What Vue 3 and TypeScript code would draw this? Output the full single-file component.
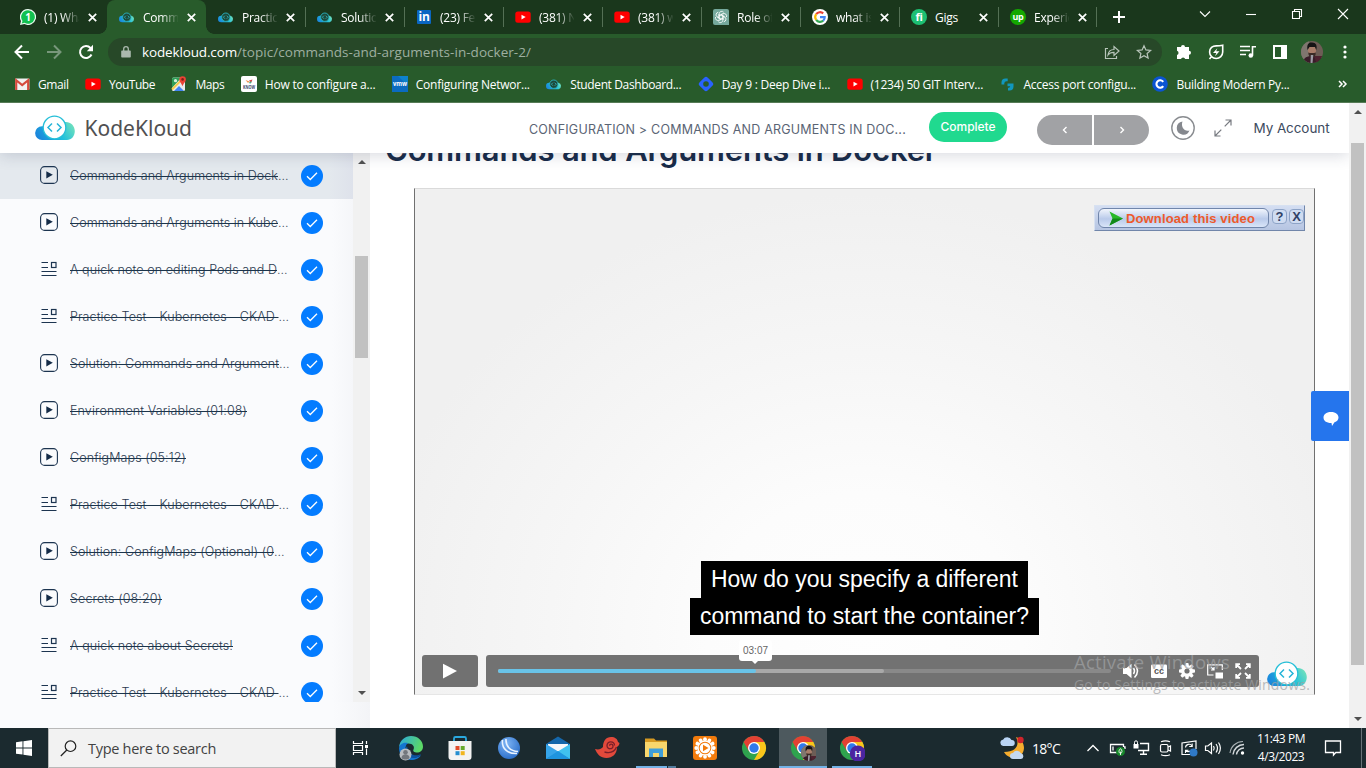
<script setup lang="ts">
interface Tab { icon: string; title: string; active?: boolean; divider?: boolean }
interface Bookmark { icon: string; label: string; width: number }
interface Lesson { kind: 'play' | 'note'; title: string; width: number; cut?: boolean; current?: boolean }
interface TaskApp { icon: string; state?: 'active' | 'open' | 'stacked' }

const tabs: Tab[] = [
  { icon: 'whatsapp', title: '(1) WhatsApp' },
  { icon: 'kodekloud', title: 'Commands', active: true },
  { icon: 'kodekloud', title: 'Practice Test', divider: true },
  { icon: 'kodekloud', title: 'Solution', divider: true },
  { icon: 'linkedin', title: '(23) Feed', divider: true },
  { icon: 'youtube', title: '(381) Nana', divider: true },
  { icon: 'youtube', title: '(381) what', divider: true },
  { icon: 'openai', title: 'Role of', divider: true },
  { icon: 'google', title: 'what is', divider: true },
  { icon: 'fiverr', title: 'Gigs', divider: true },
  { icon: 'upwork', title: 'Experience', divider: true },
]

const bookmarks: Bookmark[] = [
  { icon: 'gmail', label: 'Gmail', width: 30.5 },
  { icon: 'youtube', label: 'YouTube', width: 46 },
  { icon: 'maps', label: 'Maps', width: 29 },
  { icon: 'know', label: 'How to configure a...', width: 110.5 },
  { icon: 'vmw', label: 'Configuring Networ...', width: 114 },
  { icon: 'kodekloud', label: 'Student Dashboard...', width: 111 },
  { icon: 'hashnode', label: 'Day 9 : Deep Dive i...', width: 108.5 },
  { icon: 'youtube', label: '(1234) 50 GIT Interv...', width: 112.5 },
  { icon: 'access', label: 'Access port configu...', width: 112.5 },
  { icon: 'coursera', label: 'Building Modern Py...', width: 113 },
]

const lessons: Lesson[] = [
  { kind: 'play', title: 'Commands and Arguments in Dock', width: 208, cut: true, current: true },
  { kind: 'play', title: 'Commands and Arguments in Kube', width: 208, cut: true },
  { kind: 'note', title: 'A quick note on editing Pods and D', width: 207, cut: true },
  { kind: 'note', title: 'Practice Test - Kubernetes - CKAD ', width: 208.5, cut: true },
  { kind: 'play', title: 'Solution: Commands and Argument', width: 209, cut: true },
  { kind: 'play', title: 'Environment Variables (01:08)', width: 177 },
  { kind: 'play', title: 'ConfigMaps (05:12)', width: 116 },
  { kind: 'note', title: 'Practice Test - Kubernetes - CKAD ', width: 208.5, cut: true },
  { kind: 'play', title: 'Solution: ConfigMaps (Optional) (0', width: 204, cut: true },
  { kind: 'play', title: 'Secrets (08:20)', width: 92 },
  { kind: 'note', title: 'A quick note about Secrets!', width: 163 },
  { kind: 'note', title: 'Practice Test - Kubernetes - CKAD ', width: 208.5, cut: true },
]

const apps: TaskApp[] = [
  { icon: 'edge' }, { icon: 'store' }, { icon: 'bluedisc' }, { icon: 'mail' }, { icon: 'nautilus' },
  { icon: 'explorer', state: 'stacked' }, { icon: 'gear-orange' }, { icon: 'chrome' },
  { icon: 'chrome-user', state: 'active' }, { icon: 'chrome-h', state: 'open' },
]

const tray = ['chevron', 'battery', 'network', 'camera', 'sync', 'speaker', 'wifi']
const toothAngles = [0, 45, 90, 135, 180, 225, 270, 315]
const petalAngles = [0, 30, 60, 90, 120, 150, 180, 210, 240, 270, 300, 330]

// Adjusts letter spacing so that a label occupies the given width in pixels.
const vFit = {
  mounted(el: HTMLElement, binding: { value: number }) {
    const width = el.getBoundingClientRect().width
    const count = (el.textContent ?? '').length
    if (count > 0) el.style.letterSpacing = `${(binding.value - width) / count}px`
  },
}
</script>

<template>
  <div class="screen">
    <svg class="sprite" aria-hidden="true">
      <defs>
        <linearGradient id="g-cloud" x1="0" y1="0.6" x2="1" y2="0.3">
          <stop offset="0" stop-color="#1b86dc" /><stop offset=".55" stop-color="#1fbfdc" /><stop offset="1" stop-color="#6fe0bd" />
        </linearGradient>
        <linearGradient id="g-edge" x1="0" y1="0" x2="1" y2="0.3">
          <stop offset="0" stop-color="#2aa7e0" /><stop offset="1" stop-color="#5bd967" />
        </linearGradient>
        <radialGradient id="g-disc" cx=".4" cy=".3" r=".8">
          <stop offset="0" stop-color="#7db4f5" /><stop offset="1" stop-color="#2367c4" />
        </radialGradient>
      </defs>

      <symbol id="logo" viewBox="0 0 40 26">
        <path d="M7 25A6.900 6.900 0 0 1 7 11.200H11L28 7.500C34 5.500 39.800 10 39.800 16 39.800 21 36.500 25 32 25Z" fill="url(#g-cloud)" />
        <circle cx="19.500" cy="12.500" r="11.300" fill="#fff" stroke="#25bfd8" stroke-width="1.300" />
        <path d="m17 8.500-4 4 4 4m5-8 4 4-4 4" fill="none" stroke="#25b4d8" stroke-width="1.500" />
      </symbol>
      <symbol id="kodekloud" viewBox="0 0 16 16">
        <path d="M3.200 13.200a3.200 3.200 0 0 1 0-6.400L12.300 6.800a3.300 3.300 0 0 1 .4 6.400Z" fill="url(#g-cloud)" />
        <circle cx="7.800" cy="8.200" r="4.200" fill="#1d4a3b" stroke="#2ab7c5" stroke-width=".9" />
        <path d="M6.900 6.700 5.400 8.200 6.900 9.700M8.800 6.700l1.500 1.500-1.500 1.500" fill="none" stroke="#33bfca" stroke-width=".8" />
      </symbol>
      <symbol id="whatsapp" viewBox="0 0 16 16">
        <path d="M8 0a8 8 0 1 1-3.600 15.100L0 16l1-4A8 8 0 0 1 8 0Z" fill="#e9fbef" />
        <path d="M8 1.200A6.800 6.800 0 1 1 4.500 13.800L1.700 14.500 2.500 12A6.800 6.800 0 0 1 8 1.200Z" fill="#12c150" />
        <text x="8" y="11.700" text-anchor="middle" font-family="Open Sans, sans-serif" font-weight="700" font-size="10" fill="#fff">1</text>
      </symbol>
      <symbol id="linkedin" viewBox="0 0 16 16">
        <rect x="1" y="1" width="14" height="14" rx="1" fill="#0a66c2" />
        <text x="8" y="12.300" text-anchor="middle" font-family="Open Sans, sans-serif" font-weight="700" font-size="12" fill="#fff">in</text>
      </symbol>
      <symbol id="youtube" viewBox="0 0 16 16">
        <rect x=".3" y="2.500" width="15.400" height="11.200" rx="2.500" fill="#f00" /><path d="m6.500 5.700 4.200 2.400-4.200 2.400Z" fill="#fff" />
      </symbol>
      <symbol id="openai" viewBox="0 0 16 16">
        <path d="M2 0h12a2 2 0 0 1 2 2v14H2a2 2 0 0 1-2-2V2a2 2 0 0 1 2-2Z" fill="#75a99c" />
        <g fill="none" stroke="#fff" stroke-width=".8">
          <path v-for="a in [0, 60, 120, 180, 240, 300]" :key="a" :transform="`rotate(${a} 8 8)`" d="M6.200 9V4.800a2.500 2.500 0 0 1 4.500-1.500M6.200 6.600 9.600 4.700" />
        </g>
      </symbol>
      <symbol id="google" viewBox="0 0 16 16">
        <circle cx="8" cy="8" r="8" fill="#fff" />
        <g fill="none" stroke-width="2.200">
          <path d="M4.200 5.200a4.700 4.700 0 0 1 7-.8" stroke="#ea4335" /><path d="M4.200 5.200a4.700 4.700 0 0 0 0 5.600" stroke="#fbbc05" />
          <path d="M4.200 10.800a4.700 4.700 0 0 0 7 .9" stroke="#34a853" /><path d="M8 8.100h4.700a4.700 4.700 0 0 1-1.500 3.600" stroke="#4285f4" />
        </g>
      </symbol>
      <symbol id="fiverr" viewBox="0 0 16 16">
        <circle cx="8" cy="8" r="8" fill="#1dbf73" />
        <text x="8" y="11.800" text-anchor="middle" font-family="Open Sans, sans-serif" font-weight="700" font-size="11" fill="#fff">fi</text>
      </symbol>
      <symbol id="upwork" viewBox="0 0 16 16">
        <circle cx="8" cy="8" r="8" fill="#14a800" />
        <text x="8" y="10.600" text-anchor="middle" font-family="Open Sans, sans-serif" font-weight="700" font-size="9" fill="#fff">up</text>
      </symbol>
      <symbol id="gmail" viewBox="0 0 16 16">
        <rect x="1" y="2.500" width="14.400" height="11.500" rx="1" fill="#f2f2f2" />
        <path d="M2.200 14V4.200L8.200 9l6-4.800V14" fill="none" stroke="#d54b3d" stroke-width="2.200" />
      </symbol>
      <symbol id="maps" viewBox="0 0 16 16">
        <rect x="1" y="1.500" width="13" height="13.500" rx="1.500" fill="#e8eaed" /><path d="M1 12V3a1.500 1.500 0 0 1 1.500-1.500h8Z" fill="#2f9e57" />
        <path d="m3 15 5-5 5 5Z" fill="#4285f4" /><path d="m1 13.500 11-11" stroke="#f7cb4d" stroke-width="2" /><circle cx="4.500" cy="4.700" r="1.600" fill="#d5f0dc" />
        <path d="M11.500 10.300C10.500 7 8.300 6 8.300 3.500a3.300 3.300 0 0 1 6.600 0c0 2.500-2.400 3.500-3.400 6.800Z" fill="#ea4335" /><circle cx="11.600" cy="3.400" r="1.300" fill="#7e2018" />
      </symbol>
      <symbol id="know" viewBox="0 0 16 16">
        <rect width="16" height="16" rx="2" fill="#fff" /><path d="m4.500 4 4 1.500L7 7Z" fill="#f0934d" /><path d="m8 4.500 3.500-1L10 7Z" fill="#d94848" /><path d="m8 6 3-.5L9 8Z" fill="#45b085" />
        <text x="8" y="13.400" text-anchor="middle" textLength="12" lengthAdjust="spacingAndGlyphs" font-family="Open Sans, sans-serif" font-weight="700" font-size="4.800" fill="#37456b">KNOW</text>
      </symbol>
      <symbol id="vmw" viewBox="0 0 16 16">
        <rect width="16" height="16" fill="#0b6bc0" /><path d="M16 0v10L6 0Z" fill="#0d82cc" />
        <text x="8" y="10" text-anchor="middle" textLength="14" lengthAdjust="spacingAndGlyphs" font-family="Open Sans, sans-serif" font-weight="700" font-size="6.500" fill="#fff">vmw</text>
      </symbol>
      <symbol id="hashnode" viewBox="0 0 16 16">
        <rect x="2.200" y="2.200" width="11.600" height="11.600" rx="2.600" transform="rotate(45 8 8)" fill="#2962ff" /><circle cx="8" cy="8" r="2.800" fill="#285b2c" />
      </symbol>
      <symbol id="access" viewBox="0 0 16 16">
        <path d="M1.500 8.500V6.500a4 4 0 0 1 4-4h2.200v2.800H6.500a2.200 2.200 0 0 0-2.200 2v1.200ZM7.500 7.500h6v3a4 4 0 0 1-4 4H8v-2.800h.8a1.500 1.500 0 0 0 1.400-1.400H7.500Z" fill="#1197bd" />
      </symbol>
      <symbol id="coursera" viewBox="0 0 16 16">
        <circle cx="8" cy="8" r="7.800" fill="#0a54d2" /><path d="M11.200 5.900a3.700 3.700 0 1 0 0 4.200" fill="none" stroke="#fff" stroke-width="2.100" />
      </symbol>

      <symbol id="avatar" viewBox="0 0 22 22">
        <clipPath id="clip-av"><circle cx="11" cy="11" r="11" /></clipPath>
        <g clip-path="url(#clip-av)">
          <rect width="22" height="22" fill="#6d5d56" /><rect width="8" height="22" fill="#7f766f" />
          <path d="M2 22c0-6 5-7 9-7s9 1 11 4v3Z" fill="#391c29" /><path d="M13 15h9v6h-7Z" fill="#4f2230" />
          <ellipse cx="11" cy="9.500" rx="4" ry="5.500" fill="#a87c69" /><path d="M6.500 9C5.500 3 8 1 11 1.500c4 0 5.500 3 4.200 7.500L14 6H8.500Z" fill="#161415" />
          <path d="M7.200 11.500c2 .8 5.600.8 7.600 0 0 4-2 5-3.800 5s-3.800-2-3.800-5Z" fill="#3a2a26" /><path d="M9.800 14h2.500l-.8 8h-2Z" fill="#9d9ba4" />
        </g>
      </symbol>

      <symbol id="play" viewBox="0 0 18 18">
        <rect x=".6" y=".6" width="16.800" height="16.800" rx="4" fill="none" stroke="#1c3450" stroke-width="1.100" /><path d="M6.300 5.200 12.800 8.800l-6.500 3.700Z" fill="#142b47" />
      </symbol>
      <symbol id="note" viewBox="0 0 18 18">
        <path d="M1.500 2.500H8M1.500 7.500H8M1.500 11.500h15M1.500 15.500h15" stroke="#1c3450" stroke-width="1.200" fill="none" /><rect x="11.500" y="2.500" width="4.500" height="5" fill="none" stroke="#1c3450" stroke-width="1.200" />
      </symbol>

      <symbol id="edge" viewBox="0 0 26 26">
        <path d="M1 12C2 5 7 1 13 1c7 0 12 5 12 10.500 0 4-3 6-6 6-2.500 0-4.500-1-3.500-3 1.500-3-1-6-5-6S3 10 1 12Z" fill="url(#g-edge)" />
        <path d="M1 13C2 8 7 7 10 8c-4 3-4 12 4 14 3 1 7 0 9-2-4 8-22 7-22-7Z" fill="#1475cf" /><path d="M9 11c-4 5 0 12 7 12 3 0 6-2 7-4-4 2-12 3-14-8Z" fill="#0c529f" />
        <circle cx="7.500" cy="19.500" r="6" fill="#b9bcc0" /><circle cx="7.500" cy="17.300" r="2.300" fill="#73777d" /><path d="M3.500 23c0-5 8-5 8 0-2 2-6 2-8 0Z" fill="#73777d" />
      </symbol>
      <symbol id="store" viewBox="0 0 26 26">
        <path d="M7 6V3.500a1.500 1.500 0 0 1 1.500-1.500h9A1.500 1.500 0 0 1 19 3.500V6" fill="none" stroke="#2aa9e0" stroke-width="1.800" /><path d="M1.500 6h23v16a3 3 0 0 1-3 3h-17a3 3 0 0 1-3-3Z" fill="#f3f3f3" />
        <path d="M8.500 11h4v4h-4Z" fill="#e04b2a" /><path d="M13.700 11h4v4h-4Z" fill="#67a92d" /><path d="M8.500 16.200h4v4h-4Z" fill="#258ed0" /><path d="M13.700 16.200h4v4h-4Z" fill="#f1b61f" />
      </symbol>
      <symbol id="bluedisc" viewBox="0 0 26 26">
        <circle cx="13" cy="13" r="11" fill="url(#g-disc)" /><path d="M6.500 5C5.500 13 11 19 21 18.500M10 4C9.500 11 14 16 22 16.500" fill="none" stroke="#e9f3ff" stroke-width="1.600" />
      </symbol>
      <symbol id="mail" viewBox="0 0 26 26">
        <path d="M1 9 13 1.500 25 9v15H1Z" fill="#1567ab" /><path d="M3 9h20v8H3Z" fill="#f7f8fa" /><path d="m1 9 13 8L1 24Z" fill="#36a4e9" /><path d="M25 9 12 17l13 7Z" fill="#40c1ef" /><path d="m1 24 12-8 12 8Z" fill="#1e94df" />
      </symbol>
      <symbol id="nautilus" viewBox="0 0 26 26">
        <path d="M1 14c4 1 6 0 8-2 0-6 3-10 8-10 4 0 6.500 2 7 5l1.500 1c0 2-1.500 3-2.500 4 0 7-4.500 11-10.500 11S3 19 1 14Z" fill="#e2493b" /><path d="M20.500 10.500c0-4.500-7.500-5-7.500 0 0 4.500 6.500 4 6 .3-.5-2.200-3.400-2-3.400 0M22.500 12c-2 5-6 6.500-12 5" fill="none" stroke="#791f29" stroke-width="1.300" />
      </symbol>
      <symbol id="explorer" viewBox="0 0 26 26">
        <path d="M2 3.500h9l2 2h11v4H2Z" fill="#d79a22" /><path d="M2 7h22v15H2Z" fill="#f8d66c" /><path d="M6 13.500h14V22h-4v-4h-6v4H6Z" fill="#3f9ed9" />
      </symbol>
      <symbol id="gear-orange" viewBox="0 0 26 26">
        <rect x="1" y="1" width="24" height="24" rx="3" fill="#f27b0c" /><g fill="#fff"><circle v-for="a in petalAngles" :key="a" cx="13" cy="4.200" r="1.900" :transform="`rotate(${a} 13 13)`" /></g>
        <circle cx="13" cy="13" r="7" fill="none" stroke="#fff" stroke-width="1.400" /><circle cx="13" cy="13" r="5.300" fill="#fff" /><path d="m11 9.800 5.500 3.200-5.500 3.200Z" fill="#f27b0c" />
      </symbol>
      <symbol id="chrome" viewBox="0 0 26 26">
        <circle cx="13" cy="13" r="12" fill="#2fa34e" /><path d="M13 13 2.600 7a12 12 0 0 1 20.800 0Z" fill="#e34133" /><path d="M23.400 7A12 12 0 0 1 13 25l5.200-9L13 7Z" fill="#fbc51b" /><path d="M2.600 7 7.800 16 13 7Z" fill="#e34133" />
        <circle cx="13" cy="13" r="6" fill="#fff" /><circle cx="13" cy="13" r="4.700" fill="#3079ea" />
      </symbol>
      <symbol id="chrome-user" viewBox="0 0 26 26"><use href="#chrome" width="26" height="26" /><use href="#avatar" x="11" y="10" width="16" height="16" /></symbol>
      <symbol id="chrome-h" viewBox="0 0 26 26">
        <use href="#chrome" width="26" height="26" /><circle cx="18.800" cy="18.500" r="8" fill="#4b25a0" />
        <text x="18.800" y="22" text-anchor="middle" font-family="Open Sans, sans-serif" font-weight="600" font-size="9" fill="#fff">H</text>
      </symbol>

      <symbol id="chevron" viewBox="0 0 24 24"><path d="m6.500 15 5.500-5.500 5.500 5.500" fill="none" stroke="#fff" stroke-width="1.300" /></symbol>
      <symbol id="battery" viewBox="0 0 24 24"><path d="M18.500 11V8.500h-13v8H12M19 11h1v2M8 10.500v4" fill="none" stroke="#fff" stroke-width="1.300" /><circle cx="15.500" cy="15.500" r="4.500" fill="#16862a" /><path d="M15.500 12.600c2 1.800 2 4 0 5-2-1-2-3.200 0-5Zm0 3V19" stroke="#fff" fill="none" stroke-width=".9" /></symbol>
      <symbol id="network" viewBox="0 0 24 24"><path d="M11 7.500h8.500v7H9M14.500 14.500v3.500M11 18.300h7" fill="none" stroke="#fff" stroke-width="1.400" /><rect x="4.500" y="8" width="5" height="4.500" fill="#fff" /><path d="M5.500 8V6.300a1.500 1.500 0 0 1 3 0V8" stroke="#fff" fill="none" /></symbol>
      <symbol id="camera" viewBox="0 0 24 24"><rect x="7.500" y="8.500" width="7.500" height="7.500" rx="1.500" fill="none" stroke="#fff" stroke-width="1.200" /><path d="m15 11 2.500-1v5L15 14M8 5.800q4.500-2 9 0M8 18.700q4.500 2 9 0" fill="none" stroke="#fff" stroke-width="1.200" /></symbol>
      <symbol id="sync" viewBox="0 0 24 24"><path d="M13 18.500H5V7l14-2v8" fill="none" stroke="#fff" stroke-width="1.200" /><path d="M8.500 11.500A3.500 3.500 0 0 1 15 10m.2-2.500v3h-3M13 15a3.500 3.500 0 0 1-4.300-.5M8.500 17v-2.700h3" fill="none" stroke="#fff" stroke-width="1.100" /><circle cx="16.500" cy="16.500" r="4" fill="#2f79c7" /></symbol>
      <symbol id="speaker" viewBox="0 0 24 24"><path d="M4.500 10h2.300L10.500 7v10.500L6.800 14.500H4.500Z M12.500 10q1.500 2.200 0 4.500M15 8q3 4 0 8.500M17.500 6.500q3.800 5.500 0 11.500" fill="none" stroke="#fff" stroke-width="1.200" /></symbol>
      <symbol id="wifi" viewBox="0 0 24 24"><path d="M8 18.500A11 11 0 0 1 19 8.500M11.500 18.500A7.500 7.500 0 0 1 19 12" fill="none" stroke="#d5dadd" stroke-width="1.400" /><path d="M5 17A13 13 0 0 1 18 5.500" fill="none" stroke="#aab2b5" stroke-width="1.100" /><circle cx="17.500" cy="17" r="1.700" fill="#fff" /></symbol>
    </svg>

    <header class="browser">
      <div class="tabstrip">
        <div v-for="(tab, i) in tabs" :key="i" class="tab" :class="{ active: tab.active, divider: tab.divider }">
          <svg class="i16"><use :href="'#' + tab.icon" /></svg>
          <span class="tab-title">{{ tab.title }}</span>
          <svg class="close" viewBox="0 0 9 9"><path d="m.8.8 7.400 7.400m0-7.400L.8 8.200" /></svg>
        </div>
        <svg class="newtab" viewBox="0 0 12 12"><path d="M6 0v12M0 6h12" /></svg>
        <div class="window-buttons">
          <svg viewBox="0 0 12 12"><path d="m1 3.500 5 5 5-5" /></svg>
          <svg viewBox="0 0 12 12"><path d="M1 6.500h10" /></svg>
          <svg viewBox="0 0 12 12"><path d="M1.500 3.500h7v7h-7Zm2 0v-2h7v7h-2" /></svg>
          <svg viewBox="0 0 12 12"><path d="m1 1 10 10M11 1 1 11" /></svg>
        </div>
      </div>
      <div class="toolbar">
        <svg class="nav" viewBox="0 0 16 16"><path d="M15 8H2m6-6.500L1.500 8 8 14.500" /></svg>
        <svg class="nav dim" viewBox="0 0 16 16"><path d="M1 8h13M8 1.500 14.500 8 8 14.500" /></svg>
        <svg class="nav" viewBox="0 0 16 16"><path d="M13.500 10.500A6 6 0 1 1 12.500 4l1.500 1.500" /><path d="M15 .8v6.400H8.800Z" class="solid" /></svg>
        <div class="omnibox">
          <svg class="lock" viewBox="0 0 10 12"><path d="M1 4.500h8a.8.800 0 0 1 .8.800v5.400a.8.800 0 0 1-.8.800H1a.8.800 0 0 1-.8-.8V5.300A.8.800 0 0 1 1 4.500Z" fill="#abb9ae" /><path d="M2.700 5V3a2.300 2.300 0 0 1 4.600 0v2" fill="none" stroke="#abb9ae" stroke-width="1.300" /></svg>
          <span class="url"><span v-fit="95" class="fit host">kodekloud.com</span><span v-fit="294" class="fit">/topic/commands-and-arguments-in-docker-2/</span></span>
          <svg class="i16 share" viewBox="0 0 16 16"><path d="M4 4.500H1.500v10h11V12M4 11c.5-4 3-5.500 6-5.500V2.500L15 7l-5 4.500V8.300C7.500 8.200 5.500 9 4 11Z" /></svg>
          <svg class="i16 share" viewBox="0 0 16 16"><path d="m8 1.700 1.900 4.200 4.700.5-3.500 3.100 1 4.600L8 11.800l-4.100 2.300 1-4.600-3.500-3.100 4.700-.5Z" /></svg>
        </div>
        <div class="extensions">
          <svg class="i16" viewBox="0 0 16 16"><path d="M5 3a2 2 0 1 1 4 0h4v3.800a2 2 0 1 1 0 4V15H9.200a2.200 2.200 0 0 0-4.200 0H1v-4a2.200 2.200 0 0 0 0-4.200V3Z" fill="#fff" /></svg>
          <svg class="i16 line" viewBox="0 0 16 16"><path d="M14.700 1.300v6.700A6.500 6.500 0 0 1 1.600 8C1.600 4 4.500 1.900 8.200 1.900c2.300 0 4-.1 6.500-.6ZM4 12l-2.500 3" /><path d="M9.300 4.200 5 9h3.300L7 12.200l4.500-4.900H8.200Z" class="solid" /></svg>
          <svg class="i16 line" viewBox="0 0 16 16"><path d="M0 2.500h10M0 6.500h10M0 10.500h6M12.500 11.500V2.700H16" /><circle cx="10.800" cy="11.500" r="2.300" class="solid" /></svg>
          <svg class="i16" viewBox="0 0 16 16"><path d="M1 1h14v14H1Zm2 2v10h6V3Z" fill="#fff" fill-rule="evenodd" /></svg>
          <svg class="i22"><use href="#avatar" /></svg>
          <svg class="dots" viewBox="0 0 4 14"><circle cx="2" cy="2" r="1.600" /><circle cx="2" cy="7" r="1.600" /><circle cx="2" cy="12" r="1.600" /></svg>
        </div>
      </div>
      <div class="bookmarks">
        <div v-for="b in bookmarks" :key="b.label" class="bookmark">
          <svg class="i16"><use :href="'#' + b.icon" /></svg>
          <span v-fit="b.width" class="fit">{{ b.label }}</span>
        </div>
        <svg class="more" viewBox="0 0 9 8"><path d="m1 1 3 3-3 3m4-6 3 3-3 3" /></svg>
      </div>
    </header>

    <div class="page">
      <div class="viewport">
        <div class="topbar">
          <svg class="brand-logo"><use href="#logo" /></svg>
          <span class="brand"><span v-fit="107.500" class="fit">KodeKloud</span></span>
          <span class="crumb"><span v-fit="377" class="fit">CONFIGURATION &gt; COMMANDS AND ARGUMENTS IN DOC...</span></span>
          <button class="complete"><span v-fit="55" class="fit">Complete</span></button>
          <div class="pager">
            <button><svg viewBox="0 0 8 8"><path d="M5.500 1 2.500 4l3 3" /></svg></button>
            <button><svg viewBox="0 0 8 8"><path d="m2.500 1 3 3-3 3" /></svg></button>
          </div>
          <svg class="moon" viewBox="0 0 24 24"><circle cx="12" cy="12" r="11.200" fill="none" stroke="#8a8d91" stroke-width="1.400" /><path d="M11.500 5.500a6.600 6.600 0 1 0 7 9c-5 1.500-9-3.500-7-9Z" fill="#85888e" /></svg>
          <svg class="expand" viewBox="0 0 18 18"><path d="M1 17 7.300 10.700M17 1l-6.300 6.300M11.500 1H17v5.500M1 11.500V17h5.500" /></svg>
          <span class="account"><span v-fit="76" class="fit">My Account</span></span>
        </div>
        <div class="content">
          <aside class="sidebar">
            <div class="side-scroll">
              <ul class="lessons">
                <li v-for="(l, i) in lessons" :key="i" :class="{ current: l.current }">
                  <svg class="kind"><use :href="'#' + l.kind" /></svg>
                  <span class="lesson-title"><span v-fit="l.width" class="fit struck">{{ l.title }}</span><span v-if="l.cut">...</span></span>
                  <svg class="done" viewBox="0 0 22 22"><circle cx="11" cy="11" r="11" fill="#047cff" /><path d="m6 11.200 3.300 3.300L16 7.700" fill="none" stroke="#fff" stroke-width="1.300" /></svg>
                </li>
              </ul>
              <div class="side-bar">
                <svg class="arrow" viewBox="0 0 8 4"><path d="m0 4 4-4 4 4Z" /></svg>
                <div class="side-thumb"></div>
                <svg class="arrow" viewBox="0 0 8 4"><path d="m0 0 4 4 4-4Z" /></svg>
              </div>
            </div>
          </aside>
          <main class="main">
            <h1><span v-fit="552" class="fit">Commands and Arguments in Docker</span></h1>
            <section class="video">
              <div class="download">
                <div class="download-pill">
                  <svg viewBox="0 0 15 15"><path d="M1 .5 14.500 7.500 1 14.500l3-7Z" fill="#28b928" /><path d="M4 7.500h10.500L1 14.500Z" fill="#12891b" /></svg>
                  <span v-fit="129" class="fit">Download this video</span>
                </div>
                <b>?</b><b>X</b>
              </div>
              <div class="captions">
                <p><span v-fit="307" class="fit">How do you specify a different</span></p>
                <p><span v-fit="329" class="fit">command to start the container?</span></p>
              </div>
              <div class="player">
                <button class="playbtn"><svg viewBox="0 0 14 16"><path d="M0 .8 14 8 0 15.500Z" /></svg></button>
                <div class="controls">
                  <div class="track">
                    <div class="loaded"></div><div class="played"></div>
                    <div class="tip">03:07</div>
                  </div>
                  <div class="control-icons">
                    <svg viewBox="0 0 16 16"><path d="M0 5h3.500L8.500.8v14.500L3.500 11H0Z" fill="#fff" /><path d="M10.500 5q2 3 0 6M11.500 1.500q6 6.500 0 13" fill="none" stroke="#fff" stroke-width="1.500" /></svg>
                    <svg viewBox="0 0 16 16"><rect y="1.500" width="16" height="13.500" rx="1.200" fill="#fff" /><text x="8" y="10.500" text-anchor="middle" font-family="Liberation Sans, sans-serif" font-weight="700" font-size="9" fill="#555">cc</text></svg>
                    <svg viewBox="0 0 16 16"><g fill="#fff"><rect v-for="a in toothAngles" :key="a" x="6.300" y="0" width="3.400" height="5" rx="1" :transform="`rotate(${a} 8 8)`" /></g><circle cx="8" cy="8" r="4.300" fill="none" stroke="#fff" stroke-width="3.400" /></svg>
                    <svg viewBox="0 0 16 16"><path d="M6.500 12H.7V1.800h14.600V7M4 4l3 3m0-3v3H4" fill="none" stroke="#fff" stroke-width="1.200" /><rect x="8.500" y="9.500" width="7.500" height="6" fill="#fff" /></svg>
                    <svg viewBox="0 0 16 16"><path d="M6 6 1.500 1.500M6 10l-4.500 4.500M10 6l4.500-4.500M10 10l4.500 4.500M1.200 5V1.200H5M11 1.200h3.800V5M1.200 11v3.800H5M11 14.800h3.800V11" fill="none" stroke="#fff" stroke-width="1.800" /></svg>
                  </div>
                </div>
                <svg class="player-logo"><use href="#logo" /></svg>
              </div>
            </section>
          </main>
        </div>
        <button class="chat"><svg viewBox="0 0 16 14"><path d="M8 0c5 0 7.500 2.500 7.500 5.500 0 2.200-1.500 4-4 4.800L9 14l-.5-3C3 11 .5 8.500.5 5.500S3 0 8 0Z" fill="#fff" /></svg></button>
      </div>
      <div class="page-bar">
        <svg class="arrow" viewBox="0 0 8 4"><path d="m0 4 4-4 4 4Z" /></svg>
        <div class="page-thumb"></div>
        <svg class="arrow" viewBox="0 0 8 4"><path d="m0 0 4 4 4-4Z" /></svg>
      </div>
    </div>

    <footer class="taskbar">
      <div class="start"><svg viewBox="0 0 16 16"><path d="M0 2.200 6.500 1.300v6.200H0ZM7.400 1.200 16 0v7.500H7.400ZM0 8.400h6.500v6.200L0 13.700Zm7.400 0H16V16l-8.600-1.200Z" fill="#fff" /></svg></div>
      <div class="search">
        <svg viewBox="0 0 17 17"><circle cx="10.500" cy="6.200" r="5.300" /><path d="M6.800 10 .8 16" /></svg>
        <span v-fit="128" class="fit">Type here to search</span>
      </div>
      <div class="taskview"><svg viewBox="0 0 17 16"><path d="M1.500 1v2.500h9V1M1.500 15v-2.500h9V15M1.500 5.500h9v5h-9ZM14.500 1v3m0 4.500V15" fill="none" stroke="#fff" stroke-width="1.200" /><path d="M13 5h3v3h-3Z" fill="#fff" /></svg></div>
      <div class="apps">
        <div v-for="a in apps" :key="a.icon" class="app" :class="a.state"><svg><use :href="'#' + a.icon" /></svg></div>
      </div>
      <div class="systray">
        <div class="weather">
          <svg viewBox="0 0 26 24"><path d="M17 1c4 8 0 15-12 15 4 8 19 9 20-4 0-5-3-9-8-11Z" fill="#f6ad2e" /><circle cx="21.500" cy="4" r="3.200" fill="#cf242b" /><path d="M4 10a3.200 3.200 0 0 1 0-6.300A4.800 4.800 0 0 1 12.500 4a3 3 0 0 1 .5 6Z" fill="#b9d4f5" /><path d="M14 23a3 3 0 0 1 0-6 4.500 4.500 0 0 1 8 .3 2.900 2.900 0 0 1 0 5.700Z" fill="#c4d8f2" /></svg>
          <span v-fit="28" class="fit">18°C</span>
        </div>
        <div class="tray-icons"><svg v-for="t in tray" :key="t"><use :href="'#' + t" /></svg></div>
        <div class="clock"><span v-fit="48" class="fit">11:43 PM</span><span v-fit="46.500" class="fit">4/3/2023</span></div>
        <svg class="notice" viewBox="0 0 18 18"><path d="M1.500 2h15v11.500h-4.700L9.500 16v-2.500h-8Z" /></svg>
        <div class="peek"></div>
      </div>
    </footer>

    <div class="watermark">
      <div class="wm-title"><span v-fit="156" class="fit">Activate Windows</span></div>
      <div class="wm-sub"><span v-fit="236" class="fit">Go to Settings to activate Windows.</span></div>
    </div>
  </div>
</template>

<style>
html, body { margin: 0; overflow: hidden; }
</style>

<style scoped>
* { box-sizing: border-box; }
svg { flex: none; display: block; overflow: visible; }
button { border: 0; padding: 0; font: inherit; display: flex; align-items: center; justify-content: center; }
.sprite { position: absolute; width: 0; height: 0; }
.screen { position: relative; width: 1366px; height: 768px; overflow: hidden; display: flex; flex-direction: column; font-family: "Open Sans", "Noto Sans", sans-serif; background: #fff; }
.fit { display: inline-block; white-space: pre; flex: none; }
.i16 { width: 16px; height: 16px; }
.i22 { width: 22px; height: 22px; }

.browser { height: 103px; flex: none; background: #285b2b; color: #fff; border-bottom: 1px solid #567b56; }
.tabstrip { height: 34px; background: #1a371c; display: flex; padding-left: 8px; position: relative; }
.tab { width: 99px; height: 34px; display: flex; align-items: center; padding-left: 12px; position: relative; font-size: 12px; letter-spacing: -.25px; }
.tab.active { background: #285b2b; border-radius: 8px 8px 0 0; }
.tab.active::before, .tab.active::after { content: ""; position: absolute; bottom: 0; width: 8px; height: 8px; }
.tab.active::before { left: -8px; background: radial-gradient(circle at 0 0, #1a371c 7.500px, #285b2b 8px); }
.tab.active::after { right: -8px; background: radial-gradient(circle at 100% 0, #1a371c 7.500px, #285b2b 8px); }
.tab.divider + .tab.divider::before { content: ""; position: absolute; left: 0; top: 7px; width: 1px; height: 20px; background: #547055; }
.tab:nth-child(11)::after { content: ""; position: absolute; right: 0; top: 7px; width: 1px; height: 20px; background: #547055; }
.tab-title { margin-left: 8px; width: 35px; overflow: hidden; white-space: nowrap; -webkit-mask-image: linear-gradient(90deg, #000 18px, transparent 36px); mask-image: linear-gradient(90deg, #000 18px, transparent 36px); }
.tab:nth-child(10) .tab-title { -webkit-mask-image: none; mask-image: none; }
.close { width: 9px; height: 9px; margin-left: 8.500px; }
.close path, .newtab path { fill: none; stroke: #fff; stroke-width: 1.700; }
.newtab { width: 12px; height: 12px; margin: 11px 0 0 16px; }
.newtab path { stroke-width: 2; }
.window-buttons { margin-left: auto; display: flex; gap: 34px; padding: 8px 17px 0 0; }
.window-buttons svg { width: 12px; height: 12px; }
.window-buttons path { fill: none; stroke: #fff; stroke-width: 1.100; }

.toolbar { height: 32px; display: flex; align-items: center; padding: 4px 0 0 14px; }
.nav { width: 16px; height: 16px; margin-right: 16px; }
.nav path { fill: none; stroke: #fff; stroke-width: 2; }
.nav .solid, .line .solid { fill: #fff; stroke: none; }
.nav.dim path { stroke: #78977b; }
.omnibox { margin-left: -2px; width: 1054px; height: 28px; border-radius: 14px; background: #274828; display: flex; align-items: center; padding: 0 10px 0 13px; }
.lock { width: 10px; height: 12px; margin-right: 11px; }
.url { flex: 1; font-size: 13.500px; line-height: 28px; color: #9eafa0; display: flex; }
.host { color: #fff; }
.share { margin-left: 16px; }
.share path { fill: none; stroke: #b8c5ba; stroke-width: 1.200; }
.extensions { display: flex; align-items: center; gap: 16px; padding-left: 14px; }
.extensions .i22 { margin: 0 0 0 -3px; }
.line path { fill: none; stroke: #fff; stroke-width: 1.600; }
.dots { width: 4px; height: 14px; margin-left: 4px; fill: #fff; }
.bookmarks { height: 36px; display: flex; align-items: center; gap: 16.450px; padding: 0 19px 0 14px; font-size: 12px; }
.bookmark { display: flex; gap: 8px; align-items: center; }
.more { margin-left: auto; width: 9px; height: 8px; }
.more path { fill: none; stroke: #fff; stroke-width: 1.500; }

.page { height: 625px; display: flex; flex: none; }
.viewport { width: 1349px; position: relative; overflow: hidden; font-family: Inter, sans-serif; }
.topbar { position: relative; z-index: 2; height: 50px; background: #fff; box-shadow: 0 2px 16px rgba(50, 60, 90, .2); display: flex; align-items: center; padding-left: 35px; }
.brand-logo { width: 40px; height: 26px; }
.brand { margin-left: 9.500px; width: 444.500px; font: 400 21px/49px "Noto Sans", sans-serif; color: #505052; }
.crumb { font-size: 12.500px; color: #5a6474; width: 400px; padding-top: 2px; }
.complete { width: 78px; height: 30px; border-radius: 15px; background: #20d98f; color: #fff; font-size: 12px; font-weight: 500; margin-top: -3px; }
.pager { display: flex; gap: 2px; margin: 4px 0 0 30px; }
.pager button { width: 55px; height: 30px; background: #a1a2a5; }
.pager button:first-child { border-radius: 15px 0 0 15px; }
.pager button:last-child { border-radius: 0 15px 15px 0; }
.pager svg { width: 8px; height: 8px; }
.pager path { fill: none; stroke: #fff; stroke-width: 1.400; }
.moon { width: 24px; height: 24px; margin: -1px 0 0 22px; }
.expand { width: 18px; height: 18px; margin-left: 19px; }
.expand path { fill: none; stroke: #777a80; stroke-width: 1.200; }
.account { margin-left: 21.500px; font-size: 13.500px; color: #3d4b60; }

.content { display: flex; height: 575px; }
.sidebar { width: 370px; background: linear-gradient(90deg, #fafbfd 90%, #f3f4f7); }
.side-scroll { height: 549px; display: flex; overflow: hidden; }
.lessons { list-style: none; margin: -1px 0 0; padding: 0; width: 353px; flex: none; background: linear-gradient(90deg, #fafbfd 94%, #f5f6f9); }
.lessons li { height: 47px; display: flex; align-items: center; padding-left: 40px; }
.lessons li.current { background: linear-gradient(90deg, #e4e9ee 93%, #dee2eb); }
.kind { width: 18px; height: 18px; margin-top: -2px; }
.lesson-title { margin-left: 12px; width: 231px; font-size: 12.500px; font-weight: 300; color: #2b3a50; white-space: nowrap; display: flex; }
.struck { text-decoration: line-through; text-decoration-color: #1b344b; text-decoration-thickness: 1px; }
.done { width: 22px; height: 22px; }
.side-bar { width: 17px; background: #f1f1f1; display: flex; flex-direction: column; align-items: center; padding: 7px 0; }
.arrow { width: 8px; height: 4px; fill: #505050; }
.side-thumb { width: 13px; height: 102px; background: #c1c1c1; margin: 92px 0 auto; }

.main { width: 979px; background: #fff; }
h1 { margin: -20px 0 0 15px; height: 55px; font-size: 31px; font-weight: 600; line-height: 33px; color: #182b48; }
.video { position: relative; margin-left: 44px; width: 901px; height: 507px; border: 1px solid #dadada; border-left-color: #707070; border-right-color: #707070; border-bottom-color: #e6e6e6; background: radial-gradient(ellipse 450px 400px at 50% 88%, #fefefe 0, #fcfcfc 35%, #f6f6f6 70%, #f0f0f0 110%); display: flex; flex-direction: column; }
.download { align-self: flex-end; margin: 16px 9px 0 0; width: 211px; height: 26px; border: 1px solid #d7e1f1; border-bottom-color: #7186aa; border-right-color: #7186aa; background: linear-gradient(#d4def2, #b6c5e2); display: flex; align-items: center; padding-left: 3px; gap: 2px; }
.download-pill { width: 171px; height: 20px; border: 1px solid #7085aa; border-radius: 6px; background: linear-gradient(#f1f5fc, #b9caea 55%, #d9e5f8); display: flex; align-items: center; padding-left: 9px; gap: 2px; color: #ee5a2b; font: bold 13px "Liberation Sans", sans-serif; margin-right: 1px; }
.download-pill svg { width: 16px; height: 15px; }
.download b { width: 15px; height: 15px; border: 1px solid #8da3c7; border-radius: 4px; background: #cfdcf1; color: #2f4066; font: bold 13px/14px "Liberation Sans", sans-serif; text-align: center; margin-top: -4px; }
.captions { margin-top: 330px; display: flex; flex-direction: column; align-items: center; color: #fff; font: 23px/37px "Liberation Sans", Arial, sans-serif; }
.captions p { margin: 0; background: #000; height: 37px; padding: 0 10px; }
.player { margin-top: 20px; display: flex; padding-left: 7px; }
.playbtn { width: 56px; height: 32px; border-radius: 3px; background: #717171; }
.playbtn svg { width: 14px; height: 16px; fill: #fff; }
.controls { margin-left: 8px; width: 773px; height: 32px; background: #727272; border-radius: 3px; display: flex; align-items: center; padding-left: 12px; }
.track { position: relative; width: 613px; height: 4px; background: #898989; border-radius: 2px; }
.loaded, .played { position: absolute; left: 0; top: 0; height: 4px; border-radius: 2px; }
.loaded { width: 386px; background: #a9a9a9; }
.played { width: 258px; background: #69c3e8; }
.tip { position: absolute; left: 241px; top: -29px; width: 33px; height: 21px; background: #fff; border-radius: 3px; font: 10px/21px "Liberation Sans", sans-serif; color: #666; text-align: center; }
.tip::after { content: ""; position: absolute; left: 13px; top: 21px; border: 3.500px solid transparent; border-top-color: #fff; border-bottom: 0; }
.control-icons { display: flex; gap: 12px; margin-left: 12px; }
.control-icons svg { width: 16px; height: 16px; }
.player-logo { width: 40px; height: 26px; margin: 6px 0 0 8px; }
.chat { position: absolute; z-index: 1; left: 1311px; top: 288px; width: 38px; height: 50px; background: #2575ed; border-radius: 2px 0 0 2px; padding-top: 6px; }
.chat svg { width: 16px; height: 14px; margin-left: 2px; }
.page-bar { width: 17px; background: #f1f1f1; display: flex; flex-direction: column; align-items: center; padding: 7px 0; }
.page-thumb { width: 13px; height: 522px; background: #c1c1c1; margin: 29px 0 auto; }

.taskbar { height: 40px; flex: none; background: #1b2a2f; display: flex; color: #fff; }
.start { width: 48px; display: flex; align-items: center; justify-content: center; }
.start svg { width: 16px; height: 16px; }
.search { width: 288px; background: #f2f2f2; border: 1px solid #b9b9b9; display: flex; align-items: center; padding-left: 11px; gap: 11px; font-size: 14.500px; color: #424242; }
.search svg { width: 17px; height: 17px; fill: none; stroke: #222; stroke-width: 1.200; }
.taskview { width: 48px; display: flex; align-items: center; justify-content: center; }
.taskview svg { width: 17px; height: 16px; }
.apps { display: flex; margin-left: 2px; }
.app { width: 49px; position: relative; display: flex; align-items: center; justify-content: center; }
.app svg { width: 26px; height: 26px; }
.app.active { background: linear-gradient(90deg, transparent 1px, #4d595e 1px); }
.app.active::after, .app.open::after, .app.stacked::after { content: ""; position: absolute; bottom: 0; left: 1px; height: 2px; width: 48px; background: #73b1e6; }
.app.open::after { left: 5px; width: 40px; }
.app.stacked::after { left: 5px; width: 40px; background: linear-gradient(90deg, #73b1e6 31px, #1b2a2f 31px, #1b2a2f 32px, #527b9d 32px); }
.systray { margin-left: auto; display: flex; align-items: center; }
.weather { display: flex; align-items: center; font-size: 14px; width: 82px; }
.weather svg { width: 26px; height: 24px; margin-right: 7px; }
.tray-icons { display: flex; }
.tray-icons svg { width: 24px; height: 24px; }
.clock { width: 64px; display: flex; flex-direction: column; align-items: center; font-size: 12px; line-height: 18px; }
.notice { width: 18px; height: 18px; margin-left: 11px; fill: none; stroke: #fff; stroke-width: 1.300; }
.peek { width: 5px; height: 40px; border-left: 1px solid #667277; margin-left: 19px; }

.watermark { position: absolute; z-index: 4; left: 1074px; top: 649px; color: rgba(160, 162, 164, .72); pointer-events: none; }
.wm-title { font-size: 18.500px; line-height: 25px; }
.wm-sub { font-size: 14px; line-height: 21px; }
</style>
